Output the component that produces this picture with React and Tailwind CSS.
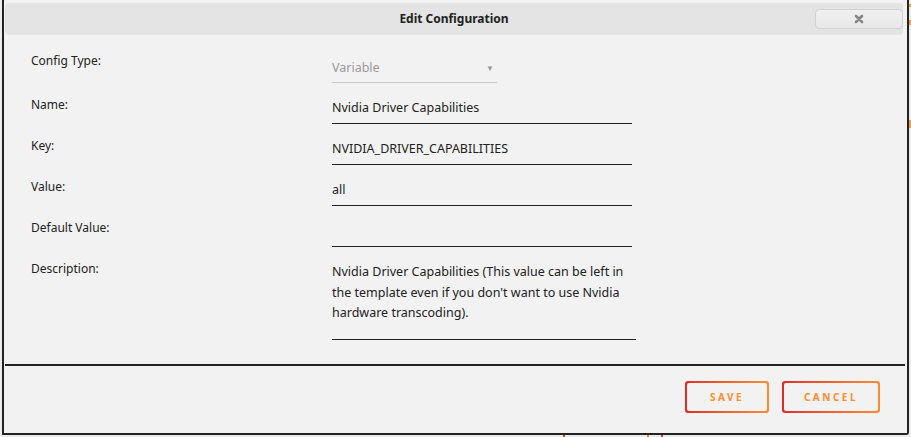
const font = { fontFamily: '"Noto Sans", "Open Sans", sans-serif' };

function Field({ label, value, top = 'mt-[10px]' }) {
    return (
        <div className={`flex ${top}`}>
            <div className="w-[301px] pt-[4px] text-[12px] leading-[16px] text-[#222]">{label}</div>
            <div className="flex h-[31px] w-[300px] items-center border-b border-[#222] text-[12.5px] text-[#222]">
                {value}
            </div>
        </div>
    );
}

function OutlineButton({ children, width }) {
    return (
        <div className={`rounded-[3px] bg-gradient-to-r from-[#e22828] to-[#ff8c2f] p-[2px] ${width}`}>
            <div className="flex h-[28px] items-center justify-center rounded-[2px] bg-[#f2f2f2] text-[10px] font-bold tracking-[2.5px] text-[#ff8c2f]">
                {children}
            </div>
        </div>
    );
}

export default function App() {
    return (
        <div className="relative h-[437px] w-[911px] overflow-hidden bg-[#ececec]" style={font}>
            {/* bits of the page peeking out behind the dialog */}
            <span className="absolute right-0 top-[4px] h-[3px] w-[2px] bg-[#f0a04a]" />
            <span className="absolute right-0 top-[20px] h-[5px] w-[2px] bg-[#f0a04a]" />
            <span className="absolute right-0 top-[120px] h-[8px] w-[2px] bg-[#f0a04a]" />
            <span className="absolute bottom-0 left-[563px] h-[2px] w-[2px] bg-[#e03a3a]" />
            <span className="absolute bottom-0 left-[647px] h-[2px] w-[2px] bg-[#f08a3a]" />
            <span className="absolute bottom-0 left-[661px] h-[2px] w-[2px] bg-[#e03a3a]" />

            <div className="ml-[2px] flex h-[435px] w-[907px] flex-col rounded-br-[3px] border-x-2 border-b-2 border-[#222] bg-[#f2f2f2]">
                <div className="ml-[1px] mt-[3px] flex h-[32px] w-[898px] items-center justify-center rounded-[4px] bg-[#e4e4e4]">
                    <div className="relative flex w-full items-center justify-center">
                        <span className="text-[12px] font-bold text-[#222]">Edit Configuration</span>
                        <button className="absolute right-0 top-1/2 flex h-[20px] w-[88px] -translate-y-1/2 items-center justify-center rounded-[4px] border border-[#d2d2d2] bg-gradient-to-b from-[#f0f0f0] to-[#e8e8e8]">
                            <svg width="10" height="10" viewBox="0 0 10 10">
                                <path d="M2 2 L8 8 M8 2 L2 8" stroke="#858585" strokeWidth="2.6" strokeLinecap="round" />
                            </svg>
                        </button>
                    </div>
                </div>

                <div className="pl-[27px]">
                    <div className="mt-[15px] flex">
                        <div className="w-[301px] pt-[3px] text-[12px] leading-[16px] text-[#222]">Config Type:</div>
                        <div className="mt-[4px] flex h-[29px] w-[165px] items-center justify-between border-b border-[#c8c8c8] pr-[3px] text-[12.5px] text-[#9a9a9a]">
                            <span>Variable</span>
                            <span className="text-[8px] text-[#999]">▼</span>
                        </div>
                    </div>
                    <Field label="Name:" value="Nvidia Driver Capabilities" />
                    <Field label="Key:" value="NVIDIA_DRIVER_CAPABILITIES" />
                    <Field label="Value:" value="all" />
                    <Field label="Default Value:" value="" />
                    <div className="mt-[10px] flex">
                        <div className="w-[301px] pt-[4px] text-[12px] leading-[16px] text-[#222]">Description:</div>
                        <div className="h-[83px] w-[304px] border-b border-[#222] pt-[5px] text-[12.5px] leading-[20.5px] text-[#222]">
                            Nvidia Driver Capabilities (This value can be left in
                            <br />
                            the template even if you don't want to use Nvidia
                            <br />
                            hardware transcoding).
                        </div>
                    </div>
                </div>

                <div className="ml-[1px] mt-[24px] h-[2px] w-[900px] bg-[#222]" />

                <div className="mr-[27px] mt-[15px] flex justify-end gap-[13px]">
                    <OutlineButton width="w-[84px]">SAVE</OutlineButton>
                    <OutlineButton width="w-[98px]">CANCEL</OutlineButton>
                </div>
            </div>
        </div>
    );
}
